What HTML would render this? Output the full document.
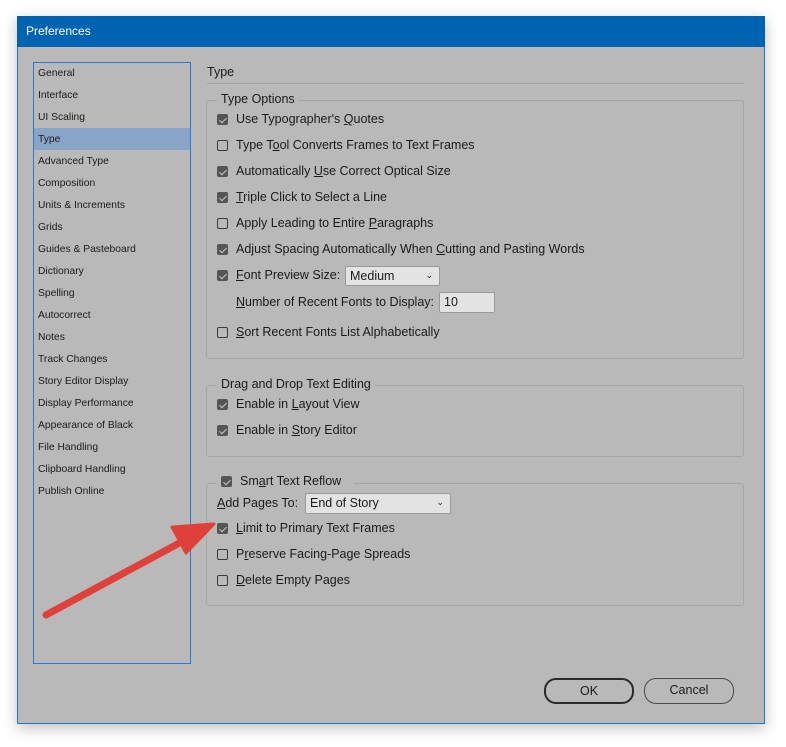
<!DOCTYPE html>
<html><head><style>
body{margin:0;width:786px;height:747px;background:#fff;position:relative;overflow:hidden;font-family:"Liberation Sans",sans-serif;color:#1a1a1a}
.a{position:absolute}
.win{left:17px;top:16px;width:748px;height:708px;background:#b9b9b9;border:1px solid #1e78c8;box-sizing:border-box;box-shadow:0 4px 14px rgba(0,0,0,.25)}
.title{left:17px;top:16px;width:748px;height:31px;background:#0063b1;color:#fff;font-size:12px;line-height:31px;padding-left:9px;box-sizing:border-box}
.side{left:33px;top:62px;width:158px;height:602px;border:1px solid #2a7ad8;box-sizing:border-box}
.si{left:38px;font-size:10.3px;line-height:22px;height:22px}
.sel{left:34px;top:128px;width:156px;height:22px;background:#88a5c8}
.t{font-size:12.5px;white-space:nowrap}
.cb{width:11px;height:11px;border:1px solid #3a3a3a;border-radius:2px;box-sizing:border-box}
.cb.on{background:#555;border-color:#555}
.cb.on:after{content:"";position:absolute;left:3px;top:1px;width:3px;height:6px;border:solid #c8c8c8;border-width:0 1.5px 1.5px 0;transform:rotate(45deg)}
.grp{border:1px solid #a6a6a6;border-radius:3px;box-sizing:border-box}
.lbl{background:#b9b9b9;padding:0 4px}
.dd{background:#e3e3e3;border:1px solid #9a9a9a;border-radius:2px;box-sizing:border-box;font-size:12.5px;padding-left:4px;line-height:18px}
.btn{border:1.5px solid #555;border-radius:12px;box-sizing:border-box;text-align:center;font-size:12.5px;line-height:22px}
u{text-decoration:underline}
</style></head><body>
<div class="a win"></div>
<div class="a title">Preferences</div>
<div class="a side"></div>
<div class="a sel"></div>
<div class="a si" style="top:63px">General</div>
<div class="a si" style="top:85px">Interface</div>
<div class="a si" style="top:107px">UI Scaling</div>
<div class="a si" style="top:129px">Type</div>
<div class="a si" style="top:151px">Advanced Type</div>
<div class="a si" style="top:173px">Composition</div>
<div class="a si" style="top:195px">Units &amp; Increments</div>
<div class="a si" style="top:217px">Grids</div>
<div class="a si" style="top:239px">Guides &amp; Pasteboard</div>
<div class="a si" style="top:261px">Dictionary</div>
<div class="a si" style="top:283px">Spelling</div>
<div class="a si" style="top:305px">Autocorrect</div>
<div class="a si" style="top:327px">Notes</div>
<div class="a si" style="top:349px">Track Changes</div>
<div class="a si" style="top:371px">Story Editor Display</div>
<div class="a si" style="top:393px">Display Performance</div>
<div class="a si" style="top:415px">Appearance of Black</div>
<div class="a si" style="top:437px">File Handling</div>
<div class="a si" style="top:459px">Clipboard Handling</div>
<div class="a si" style="top:481px">Publish Online</div>

<div class="a t" style="left:207px;top:65px">Type</div>
<div class="a" style="left:207px;top:83px;width:537px;height:1px;background:#a6a6a6"></div>

<div class="a grp" style="left:206px;top:100px;width:538px;height:259px"></div>
<div class="a t lbl" style="left:217px;top:92px">Type Options</div>
<div class="a cb on" style="left:217px;top:114px"></div><div class="a t" style="left:236px;top:112px">Use Typographer's <u>Q</u>uotes</div>
<div class="a cb" style="left:217px;top:140px"></div><div class="a t" style="left:236px;top:138px">Type T<u>o</u>ol Converts Frames to Text Frames</div>
<div class="a cb on" style="left:217px;top:166px"></div><div class="a t" style="left:236px;top:164px">Automatically <u>U</u>se Correct Optical Size</div>
<div class="a cb on" style="left:217px;top:192px"></div><div class="a t" style="left:236px;top:190px"><u>T</u>riple Click to Select a Line</div>
<div class="a cb" style="left:217px;top:218px"></div><div class="a t" style="left:236px;top:216px">Apply Leading to Entire <u>P</u>aragraphs</div>
<div class="a cb on" style="left:217px;top:244px"></div><div class="a t" style="left:236px;top:242px">Adjust Spacing Automatically When <u>C</u>utting and Pasting Words</div>
<div class="a cb on" style="left:217px;top:270px"></div><div class="a t" style="left:236px;top:268px"><u>F</u>ont Preview Size:</div>
<div class="a dd" style="left:345px;top:266px;width:95px;height:20px">Medium<span style="position:absolute;right:6px;top:-1px;font-size:9px">&#8964;</span></div>
<div class="a t" style="left:236px;top:295px"><u>N</u>umber of Recent Fonts to Display:</div>
<div class="a dd" style="left:439px;top:292px;width:56px;height:21px;line-height:19px">10</div>
<div class="a cb" style="left:217px;top:327px"></div><div class="a t" style="left:236px;top:325px"><u>S</u>ort Recent Fonts List Alphabetically</div>

<div class="a grp" style="left:206px;top:385px;width:538px;height:72px"></div>
<div class="a t lbl" style="left:217px;top:377px">Drag and Drop Text Editing</div>
<div class="a cb on" style="left:217px;top:399px"></div><div class="a t" style="left:236px;top:397px">Enable in <u>L</u>ayout View</div>
<div class="a cb on" style="left:217px;top:425px"></div><div class="a t" style="left:236px;top:423px">Enable in <u>S</u>tory Editor</div>

<div class="a grp" style="left:206px;top:483px;width:538px;height:123px"></div>
<div class="a lbl" style="left:216px;top:474px;width:130px;height:16px"></div>
<div class="a cb on" style="left:221px;top:476px"></div><div class="a t" style="left:240px;top:474px">Sm<u>a</u>rt Text Reflow</div>
<div class="a t" style="left:217px;top:496px"><u>A</u>dd Pages To:</div>
<div class="a dd" style="left:305px;top:493px;width:146px;height:21px;line-height:19px">End of Story<span style="position:absolute;right:6px;top:-1px;font-size:9px">&#8964;</span></div>
<div class="a cb on" style="left:217px;top:523px"></div><div class="a t" style="left:236px;top:521px"><u>L</u>imit to Primary Text Frames</div>
<div class="a cb" style="left:217px;top:549px"></div><div class="a t" style="left:236px;top:547px">P<u>r</u>eserve Facing-Page Spreads</div>
<div class="a cb" style="left:217px;top:575px"></div><div class="a t" style="left:236px;top:573px"><u>D</u>elete Empty Pages</div>

<div class="a btn" style="left:544px;top:678px;width:90px;height:26px;border:2px solid #2a2a2a">OK</div>
<div class="a btn" style="left:644px;top:678px;width:90px;height:26px;border-color:#4a4a4a;border-width:1px">Cancel</div>

<svg class="a" style="left:0;top:0" width="786" height="747">
<line x1="46" y1="615" x2="185" y2="540" stroke="#e0403a" stroke-width="7" stroke-linecap="round"/>
<polygon points="214,524 172,527 186,553" fill="#e0403a" stroke="#e0403a" stroke-width="3" stroke-linejoin="round"/>
</svg>
</body></html>
